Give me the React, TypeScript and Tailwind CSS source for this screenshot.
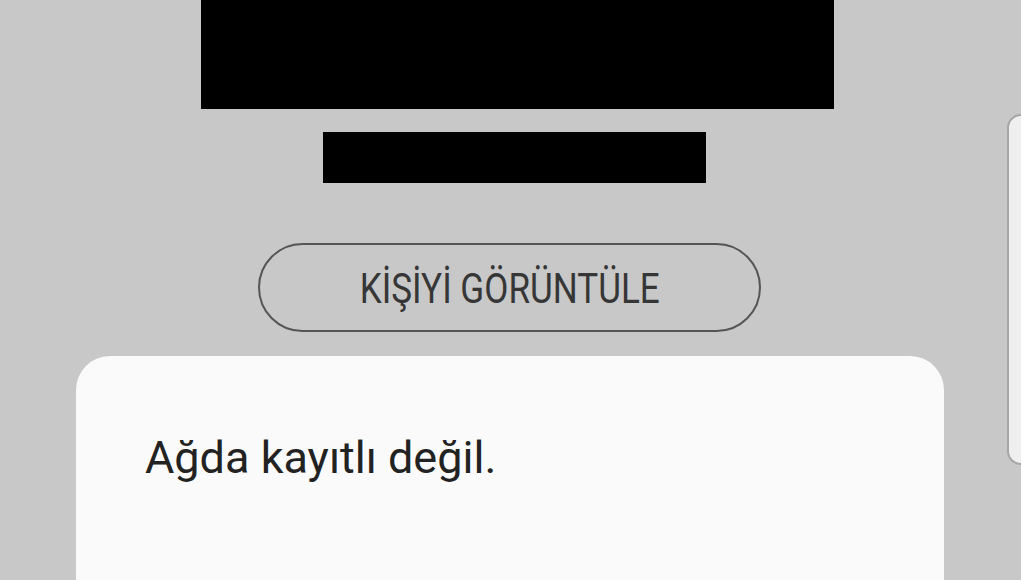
import React from "react";

export default function App() {
  return (
    <div className="relative w-[1021px] h-[580px] overflow-hidden bg-[#c8c8c8]" style={{ fontFamily: "Roboto, 'Noto Sans', sans-serif" }}>
      <div className="flex flex-col items-start">
        <div className="ml-[201px] w-[633px] h-[109px] bg-black" />
        <div className="ml-[323px] mt-[23px] w-[383px] h-[51px] bg-black" />
        <div className="ml-[258px] mt-[60px] w-[503px] h-[89px] rounded-full border-2 border-[#555] flex items-center justify-center">
          <span className="inline-block text-[42px] leading-none text-[#363636] origin-center scale-x-[0.835] whitespace-nowrap mt-[2px]">KİŞİYİ GÖRÜNTÜLE</span>
        </div>
        <div className="ml-[76px] mt-[24px] w-[868px] h-[260px] bg-[#fafafa] rounded-t-[34px]">
          <div className="pl-[69px] pt-[79px] text-[45px] leading-none text-[#222]">Ağda kayıtlı değil.</div>
        </div>
      </div>
      <div className="absolute left-[1007px] top-[114px] w-[40px] h-[351px] rounded-[14px] border-2 border-[#a6a6a6] bg-[#efefef]" />
    </div>
  );
}
